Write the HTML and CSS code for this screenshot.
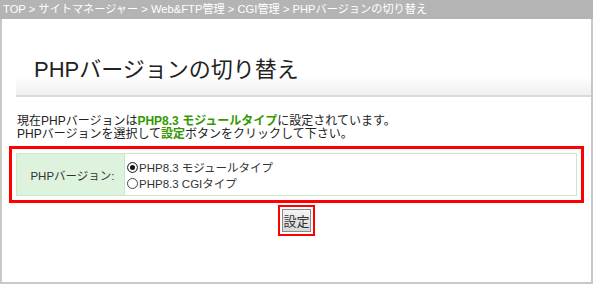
FILE: index.html
```html
<!DOCTYPE html>
<html lang="ja">
<head>
    <meta charset="UTF-8">
    <meta name="viewport" content="width=device-width, initial-scale=1.0">
    <title>PHPバージョンの切り替え</title>
    <link rel="stylesheet" href="styles.css">
</head>
<body>
    <div class="crumb">TOP &gt; サイトマネージャー &gt; Web&amp;FTP管理 &gt; CGI管理 &gt; PHPバージョンの切り替え</div>
    <div class="frame">
        <div class="title-box">
            <h1 class="title">PHPバージョンの切り替え</h1>
        </div>
        <p class="note">
            現在PHPバージョンは<strong class="hl">PHP8.3 モジュールタイプ</strong>に設定されています。<br>
            PHPバージョンを選択して<strong class="hl">設定</strong>ボタンをクリックして下さい。
        </p>
        <div class="mark">
            <table class="form-table">
                <tr>
                    <th>PHPバージョン:</th>
                    <td>
                        <label class="opt"><input type="radio" name="php" checked>PHP8.3 モジュールタイプ</label>
                        <label class="opt"><input type="radio" name="php">PHP8.3 CGIタイプ</label>
                    </td>
                </tr>
            </table>
        </div>
        <div class="actions">
            <span class="mark-btn"><button class="btn">設定</button></span>
        </div>
    </div>
</body>
</html>
```

FILE: styles.css
```css
body {
    margin: 0;
    font-family: "Liberation Sans", "Noto Sans CJK JP", sans-serif;
    font-size: 12px;
    color: #222;
    background-color: #fff;
}

.crumb {
    height: 19px;
    line-height: 19px;
    padding-left: 3px;
    font-size: 11.2px;
    background-color: #b4b4b4;
    color: #fff;
    white-space: nowrap;
}

.frame {
    height: 265px;
    box-sizing: border-box;
    border-left: 2px solid #c8c8c8;
    border-right: 2px solid #c8c8c8;
    border-bottom: 2px solid #c8c8c8;
    overflow: hidden;
}

.title-box {
    margin: 0 0 0 14px;
    padding: 36px 0 10px 18px;
    background: linear-gradient(to bottom, #fff 0, #fff 75%, #efefef 100%);
    border-bottom: 2px solid #dadada;
}

.title {
    margin: 0;
    font-size: 22px;
    line-height: 30px;
    font-weight: normal;
    color: #222;
}

.note {
    margin: 18px 0 0 15px;
    line-height: 13px;
    color: #222;
}

.hl {
    color: #339900;
}

.mark {
    margin: 5px 7px 0 7px;
    border: 3px solid #ff0000;
    padding: 4px;
}

.form-table {
    width: 100%;
    border-collapse: collapse;
    border: 1px solid #c8e8c8;
}

.form-table th {
    width: 103px;
    padding: 0 0 0 4px;
    background-color: #ddf3dd;
    border-right: 1px solid #c8e8c8;
    font-size: 11.5px;
    font-weight: normal;
    color: #333;
    text-align: center;
}

.form-table td {
    padding: 5px 4px 4px 2px;
    font-size: 11.5px;
    color: #333;
}

.opt {
    display: flex;
    align-items: center;
    height: 16px;
}

.opt input {
    appearance: none;
    width: 11px;
    height: 11px;
    margin: 0 1px 0 0;
    border: 1px solid #444;
    border-radius: 50%;
    background-color: #fff;
}

.opt input:checked {
    background-color: #111;
    box-shadow: inset 0 0 0 2px #fff;
}

.actions {
    display: flex;
    justify-content: center;
    margin-top: 2px;
}

.mark-btn {
    border: 2px solid #ff0000;
    padding: 2px;
}

.btn {
    display: block;
    width: 29px;
    height: 23px;
    padding: 0;
    font-family: "Noto Sans CJK JP", sans-serif;
    font-size: 13px;
    color: #333;
    background: linear-gradient(to bottom, #f4f4f4, #d8d8d8);
    border: 1px solid #8a8a8a;
}
```
